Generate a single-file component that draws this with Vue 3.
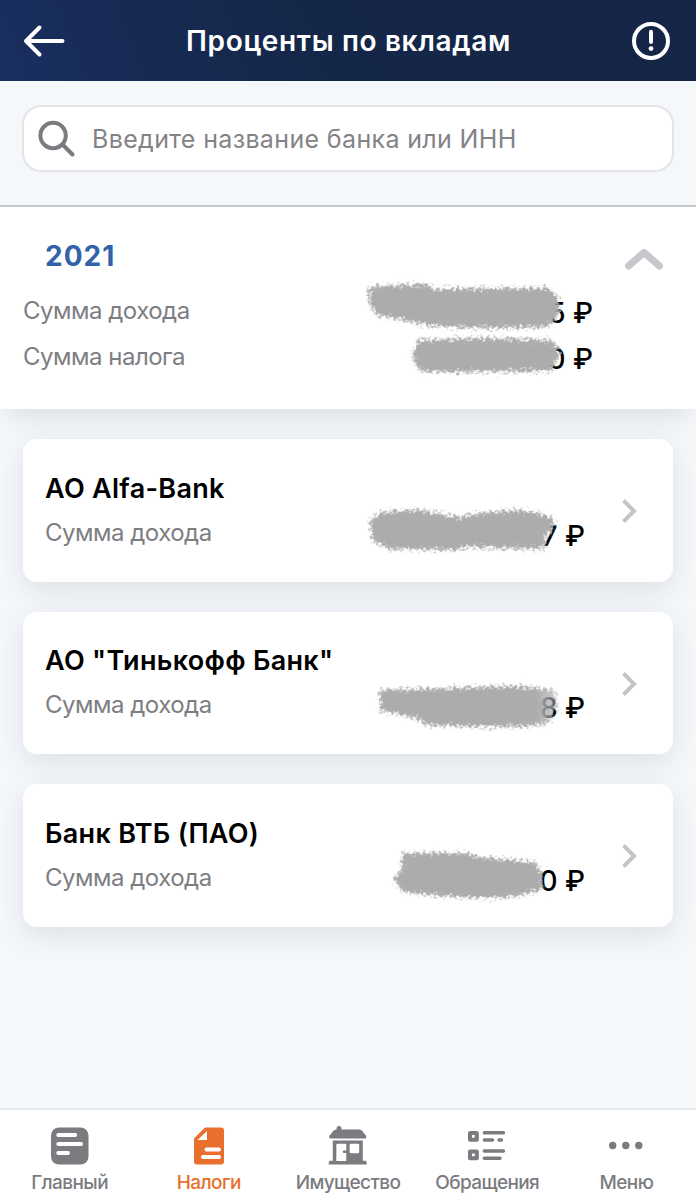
<template>
  <div class="screen">
    <header class="header">
      <button class="icon-button" aria-label="Назад">
        <svg width="44" height="34" viewBox="0 0 44 34">
          <path d="M17.5 3.5L4 17L17.5 30.5M4 17H40.5" />
        </svg>
      </button>
      <h1 class="title">Проценты по вкладам</h1>
      <button class="icon-button" aria-label="Информация">
        <svg width="40" height="40" viewBox="0 0 40 40">
          <circle cx="20" cy="20" r="17" />
          <path d="M20 10.8V21" />
          <circle class="dot" cx="20" cy="27.6" r="2.4" />
        </svg>
      </button>
    </header>

    <div class="search">
      <label class="search-field">
        <svg width="38" height="38" viewBox="0 0 38 38">
          <circle cx="15.1" cy="15.5" r="12.7" />
          <path d="M25 25L34.5 34.5" />
        </svg>
        <span class="placeholder">Введите название банка или ИНН</span>
      </label>
    </div>

    <section class="summary">
      <div class="summary-head">
        <h2 class="year">2021</h2>
        <svg class="collapse" width="40" height="26" viewBox="0 0 40 26">
          <path d="M4.5 20L20 6.5L35.5 20" />
        </svg>
      </div>
      <div v-for="row in totals" :key="row.label" class="total">
        <span class="label">{{ row.label }}</span>
        <span class="amount">{{ row.amount }}</span>
      </div>
      <svg class="smudge" width="696" height="202" viewBox="0 207 696 202">
        <path v-for="row in totals" :key="row.label" :d="row.smudge" filter="url(#rough)" />
      </svg>
    </section>

    <main class="banks">
      <article v-for="bank in banks" :key="bank.name" class="card">
        <div class="card-text">
          <h3 class="name">{{ bank.name }}</h3>
          <div class="income">
            <span class="label">Сумма дохода</span>
            <span class="amount">{{ bank.amount }}</span>
          </div>
        </div>
        <svg class="chevron" width="18" height="26" viewBox="0 0 18 26">
          <path d="M2.5 2.5L13 13L2.5 23.5" />
        </svg>
        <svg class="smudge" width="650" height="142" viewBox="23 0 650 142">
          <path :class="{ faint: bank.faint }" :d="bank.smudge" filter="url(#rough)" />
        </svg>
      </article>
    </main>

    <nav class="tabs">
      <a v-for="tab in tabs" :key="tab.id" class="tab" :class="{ active: tab.id === current }">
        <svg width="40" height="40" viewBox="0 0 40 40">
          <template v-if="tab.id === 'main'">
            <rect x="1" y="1.5" width="37.5" height="37" rx="8" />
            <path class="cut" d="M8.3 9H25.2M8.3 18H31M8.3 27H18" />
          </template>
          <template v-else-if="tab.id === 'taxes'">
            <path d="M16 1.5H32Q35 1.5 35 4.5V35.5Q35 38.5 32 38.5H8Q5 38.5 5 35.5V12.5Z" />
            <path class="paper" d="M18 5V14H8.5Z" />
            <path class="cut" d="M17.5 23.5H30M14 31H30" />
          </template>
          <template v-else-if="tab.id === 'property'">
            <path d="M8.5 3.5V2.2Q8.5 0 11 0T13.5 2.2V3.5H31.5Q33.3 3.5 34.3 5L38.2 10Q39 12.5 36.5 12.5H3Q.5 12.5 1.3 10L5.2 5Q6.2 3.5 8.5 3.5Z" />
            <path fill-rule="evenodd" d="M4.8 14.5H34.8V34.8H37Q38.7 34.8 38.7 36.5V38.5H.8V36.5Q.8 34.8 2.5 34.8H4.8ZM8.3 19V35H18.3V27H16.3Q14.6 27 14.6 25.7T16.3 24.4H18.3V18.8Q18.3 17.8 17.3 17.8H9.5Q8.3 17.8 8.3 19ZM21.6 19V26Q21.6 27.2 22.8 27.2H30Q31.2 27.2 31.2 26V19Q31.2 17.8 30 17.8H22.8Q21.6 17.8 21.6 19Z" />
          </template>
          <template v-else-if="tab.id === 'requests'">
            <path class="line square" d="M3 6.9H9.8V13.7H3ZM3 25.5H9.8V32.3H3Z" />
            <path class="line" d="M17.3 6.7H36.5M17.3 14H25.5M32 14H34.5M17.3 25H36.5M17.3 32.3H33" />
          </template>
          <template v-else>
            <circle cx="6.7" cy="19.5" r="3.7" />
            <circle cx="19.8" cy="19.5" r="3.7" />
            <circle cx="32.8" cy="19.5" r="3.7" />
          </template>
        </svg>
        <span>{{ tab.title }}</span>
      </a>
    </nav>

    <svg class="defs" width="0" height="0">
      <filter id="rough" x="-5%" y="-20%" width="110%" height="140%">
        <feTurbulence type="fractalNoise" baseFrequency="0.3" numOctaves="3" seed="4" result="noise" />
        <feGaussianBlur in="SourceGraphic" stdDeviation="1.6" result="soft" />
        <feDisplacementMap in="soft" in2="noise" scale="12" xChannelSelector="R" yChannelSelector="G" result="torn" />
        <feGaussianBlur in="torn" stdDeviation="0.4" />
      </filter>
      <linearGradient id="fade" x1="0" x2="1" y1="0" y2="0">
        <stop offset="0.88" stop-color="#acacac" />
        <stop offset="1" stop-color="#acacac" stop-opacity="0.55" />
      </linearGradient>
    </svg>
  </div>
</template>

<script setup>
import { ref } from 'vue';

const current = ref('taxes');

// Hand-drawn covers over the private part of each sum
const totals = [
  {
    label: 'Сумма дохода',
    amount: '5 ₽',
    smudge: 'M369 287L398 285L425 284L435 289L481 288L548 288L557 295L559 313L549 327L508 328L471 328L431 326L398 319L376 315L369 303Z',
  },
  {
    label: 'Сумма налога',
    amount: '0 ₽',
    smudge: 'M418 340L481 338L552 340L560 353L552 371L481 372L421 372L412 357Z',
  },
];

const banks = [
  {
    name: 'АО Alfa-Bank',
    amount: '7 ₽',
    smudge: 'M370 81L381 73L418 71L438 74L458 78L481 74L515 71L538 74L552 79L555 86L546 97L544 110L498 109L465 108L455 111L388 110L372 101Z',
  },
  {
    name: 'АО "Тинькофф Банк"',
    amount: '8 ₽',
    faint: true,
    smudge: 'M380 78L415 77L448 76L515 74L555 78L558 95L549 111L530 114L481 115L425 113L419 107L398 102L380 99Z',
  },
  {
    name: 'Банк ВТБ (ПАО)',
    amount: '0 ₽',
    smudge: 'M403 69L468 69L478 73L535 78L542 89L542 106L511 113L481 114L441 112L403 108L394 96L401 86Z',
  },
];

const tabs = [
  { id: 'main', title: 'Главный' },
  { id: 'taxes', title: 'Налоги' },
  { id: 'property', title: 'Имущество' },
  { id: 'requests', title: 'Обращения' },
  { id: 'menu', title: 'Меню' },
];
</script>

<style>
body {
  margin: 0;
}
</style>

<style scoped>
.screen {
  display: flex;
  flex-direction: column;
  width: 696px;
  height: 1200px;
  overflow: hidden;
  background: #f4f8fb;
  font-family: Inter, "Liberation Sans", sans-serif;
  color: #000;
}

h1,
h2,
h3 {
  margin: 0;
}

.header {
  display: flex;
  align-items: center;
  justify-content: space-between;
  box-sizing: border-box;
  height: 81px;
  flex: none;
  padding: 0 25px 0 22px;
  background: linear-gradient(70deg, #1a2f60 0%, #172a54 20%, #152748 45%, #152546 100%);
}

.icon-button {
  display: flex;
  padding: 0;
  border: 0;
  background: none;
}

.icon-button svg {
  fill: none;
  stroke: #fff;
  stroke-width: 4;
  stroke-linecap: round;
  stroke-linejoin: round;
}

.icon-button .dot {
  fill: #fff;
  stroke: none;
}

.title {
  font-size: 28px;
  font-weight: 600;
  line-height: 36px;
  letter-spacing: 0.65px;
  color: #fff;
}

.search {
  position: relative;
  z-index: 1;
  box-sizing: border-box;
  height: 126px;
  flex: none;
  padding: 24px 22px 0;
  border-bottom: 2px solid #c5c7cc;
  background: #f4f8fb;
}

.search-field {
  display: flex;
  align-items: center;
  gap: 16px;
  box-sizing: border-box;
  height: 67px;
  padding: 0 14px;
  border: 2px solid #e5e3e8;
  border-radius: 19px;
  background: #fff;
}

.search-field svg {
  fill: none;
  stroke: #7b7b80;
  stroke-width: 4;
  stroke-linecap: round;
}

.placeholder {
  font-size: 25px;
  letter-spacing: 0.35px;
  color: #838387;
}

.summary {
  position: relative;
  box-sizing: border-box;
  height: 202px;
  flex: none;
  padding: 32px 103px 0 23px;
  background: #fff;
  box-shadow: 0 14px 26px -8px rgba(60, 50, 70, 0.14);
}

.summary-head {
  display: flex;
  justify-content: space-between;
  margin-right: -71px;
  padding-left: 22px;
}

.year {
  font-size: 28px;
  line-height: 34px;
  font-weight: 700;
  letter-spacing: 1px;
  color: #3263a9;
}

.collapse {
  margin-top: 7px;
  fill: none;
  stroke: #c8c7cd;
  stroke-width: 7;
  stroke-linecap: round;
  stroke-linejoin: round;
}

.total {
  display: flex;
  justify-content: space-between;
  align-items: center;
  height: 46px;
}

.summary-head + .total {
  margin-top: 15px;
}

.label {
  font-size: 24px;
  line-height: 30px;
  letter-spacing: -0.5px;
  color: #7d7e83;
}

.amount {
  font-size: 28px;
  line-height: 30px;
  font-weight: 550;
  padding-top: 4px;
}

.smudge {
  position: absolute;
  top: 0;
  left: 0;
  fill: #acacac;
  pointer-events: none;
}

.smudge .faint {
  fill: url(#fade);
}

.banks {
  display: flex;
  flex: 1;
  flex-direction: column;
  gap: 30px;
  padding: 30px 23px 0;
}

.card {
  position: relative;
  display: flex;
  align-items: center;
  box-sizing: border-box;
  height: 142.5px;
  padding: 2px 34px 0 22px;
  border-radius: 14px;
  background: #fff;
  box-shadow: 0 8px 28px rgba(60, 50, 70, 0.12);
}

.card-text {
  flex: 1;
}

.name {
  font-size: 27px;
  line-height: 34px;
  font-weight: 600;
  letter-spacing: 0.3px;
}

.income {
  display: flex;
  justify-content: space-between;
  margin-top: 11px;
}

.income .label {
  padding-top: 1px;
}

.chevron {
  margin-left: 36px;
  fill: none;
  stroke: #c5c4c9;
  stroke-width: 4;
}

.tabs {
  display: flex;
  box-sizing: border-box;
  height: 92px;
  flex: none;
  border-top: 2px solid #e2e8ed;
  background: #fff;
}

.tab {
  display: flex;
  flex: 1 1 0;
  flex-direction: column;
  align-items: center;
  padding-top: 16px;
  font-size: 19px;
  line-height: 24px;
  font-weight: 500;
  letter-spacing: -0.6px;
  color: #7b7b80;
}

.tab svg {
  margin-bottom: 5px;
  fill: currentColor;
}

.tab .cut,
.tab .line {
  fill: none;
  stroke: #fff;
  stroke-width: 4;
  stroke-linecap: round;
}

.tab .line {
  stroke: currentColor;
  stroke-width: 3.4;
}

.tab .square {
  stroke-width: 4;
  stroke-linejoin: round;
}

.tab .paper {
  fill: #fff;
}

.tab.active {
  color: #e8702c;
}

.defs {
  position: absolute;
}
</style>
